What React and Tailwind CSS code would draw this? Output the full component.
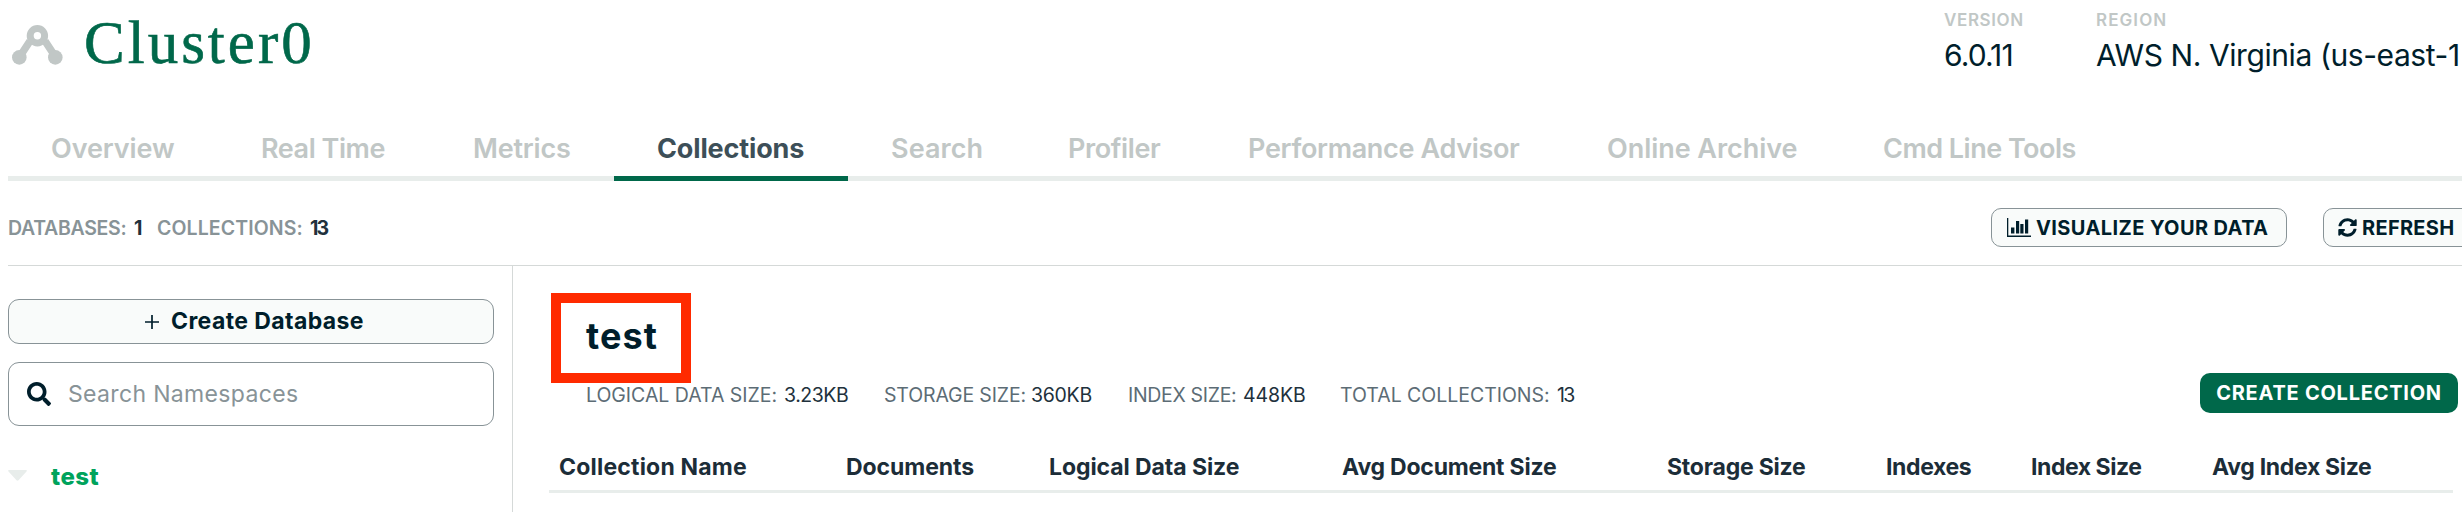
import React from "react";
import { FaSyncAlt, FaSearch } from "react-icons/fa";

const tabs = [
  { label: "Overview", cls: "w-[210px] pl-[43px] tracking-[-0.1px]" },
  { label: "Real Time", cls: "w-[212px] pl-[43px] tracking-[-0.45px]" },
  { label: "Metrics", cls: "w-[184px] pl-[43px] tracking-[-0.2px]" },
  { label: "Collections", cls: "w-[234px] pl-[43px] font-bold tracking-[-0.15px]", active: true },
  { label: "Search", cls: "w-[176px] pl-[43px] tracking-[0.07px]" },
  { label: "Profiler", cls: "w-[180px] pl-[44px] tracking-[-0.39px]" },
  { label: "Performance Advisor", cls: "w-[360px] pl-[44px] tracking-[-0.33px]" },
  { label: "Online Archive", cls: "w-[276px] pl-[43px] tracking-[-0.05px]" },
  { label: "Cmd Line Tools", cls: "flex-1 pl-[43px] tracking-[-0.51px]" },
];

const stats = [
  { label: "LOGICAL DATA SIZE:", value: "3.23KB", cls: "w-[298px]", lc: "w-[198px] tracking-[-0.02px]", vc: "tracking-[-0.45px]" },
  { label: "STORAGE SIZE:", value: "360KB", cls: "w-[244px]", lc: "w-[147px] tracking-[-0.15px]", vc: "tracking-[-0.29px]" },
  { label: "INDEX SIZE:", value: "448KB", cls: "w-[212px]", lc: "w-[115px] tracking-[-0.32px]", vc: "tracking-[-0.1px]" },
  { label: "TOTAL COLLECTIONS:", value: "13", cls: "", lc: "w-[217px] tracking-[-0.02px]", vc: "tracking-[-1.8px]" },
];

const columns = [
  { label: "Collection Name", cls: "w-[287px] tracking-[0.2px]" },
  { label: "Documents", cls: "w-[203px] tracking-[-0.08px]" },
  { label: "Logical Data Size", cls: "w-[293px] tracking-[-0.08px]" },
  { label: "Avg Document Size", cls: "w-[325px] tracking-[-0.22px]" },
  { label: "Storage Size", cls: "w-[219px] tracking-[-0.22px]" },
  { label: "Indexes", cls: "w-[145px] tracking-[-0.38px]" },
  { label: "Index Size", cls: "w-[181px] tracking-[-0.45px]" },
  { label: "Avg Index Size", cls: "tracking-[-0.32px]" },
];

function ClusterIcon() {
  return (
    <svg className="h-[42px] w-[52px] shrink-0" viewBox="0 0 52 42" fill="#c1c7c6">
      <path d="M18 17 L7.5 33 M33 17 L43.5 33" stroke="#c1c7c6" strokeWidth="7.5" />
      <circle cx="25.4" cy="11.7" r="7.2" fill="none" stroke="#c1c7c6" strokeWidth="7" />
      <circle cx="7.3" cy="33.4" r="7.3" />
      <circle cx="43.3" cy="33.4" r="7.3" />
    </svg>
  );
}

function ChartIcon() {
  return (
    <svg className="h-[19px] w-[24px] shrink-0" viewBox="0 0 24 19" fill="#001e2b">
      <path d="M0 0h1.3v17.5H24V19H0z" />
      <rect x="4" y="9.5" width="3.4" height="6" />
      <rect x="9" y="3" width="3.2" height="12.5" />
      <rect x="13.3" y="6" width="3.2" height="9.5" />
      <rect x="18" y="1.5" width="3.2" height="14" />
    </svg>
  );
}

export default function App() {
  return (
    <div className="flex h-[512px] w-full flex-col overflow-hidden whitespace-nowrap bg-white font-['Inter','Liberation_Sans',sans-serif] text-[#001e2b]">
      <header className="flex h-[121px] shrink-0">
        <div className="flex w-[1944px] items-start pl-3">
          <div className="pt-6">
            <ClusterIcon />
          </div>
          <h1 className="pl-[20px] pt-[11px] font-['Liberation_Serif',serif] text-[61px] leading-[64px] tracking-[3px] text-[#00684a] [-webkit-text-stroke:0.6px_#00684a]">
            Cluster0
          </h1>
        </div>
        <div className="w-[152px] shrink-0 pt-2">
          <div className="text-[17px] font-semibold leading-6 tracking-[0.62px] text-[#c1c7c6]">VERSION</div>
          <div className="pt-[5px] text-[30px] leading-9 tracking-[-0.9px]">6.0.11</div>
        </div>
        <div className="shrink-0 pt-2">
          <div className="text-[17px] font-semibold leading-6 tracking-[1.08px] text-[#c1c7c6]">REGION</div>
          <div className="pt-[5px] text-[30px] leading-9 tracking-[-0.42px]">AWS N. Virginia (us-east-1</div>
        </div>
      </header>

      <nav className="ml-2 flex h-[60px] shrink-0 text-[27px] font-semibold">
        {tabs.map((t) => (
          <div
            key={t.label}
            className={`${t.cls} shrink-0 border-b-[5px] leading-[56px] ${
              t.active ? "border-[#00684a] text-[#3d4f58]" : "border-[#e8edeb] text-[#c1c7c6]"
            }`}
          >
            {t.label}
          </div>
        ))}
      </nav>

      <div className="ml-2 flex h-[84px] shrink-0 items-center pt-[9px]">
        <div className="flex w-[1983px] shrink-0 text-[19.5px] font-semibold leading-6">
          <span className="w-[126px] tracking-[-0.3px] text-[#889397]">DATABASES:</span>
          <span className="w-[23px] font-bold text-[#21313c]">1</span>
          <span className="w-[153px] tracking-[0.11px] text-[#889397]">COLLECTIONS:</span>
          <span className="font-bold tracking-[-1.8px] text-[#21313c]">13</span>
        </div>
        <button className="flex h-[39px] w-[296px] shrink-0 items-center rounded-[10px] border border-[#889397] bg-[#f9fbfa] pl-[15px] text-[20px] font-bold tracking-[0.4px]">
          <ChartIcon />
          <span className="pl-[5px]">VISUALIZE YOUR DATA</span>
        </button>
        <button className="ml-[36px] flex h-[39px] w-[160px] shrink-0 items-center rounded-[10px] border border-[#889397] bg-[#f9fbfa] pl-[14px] text-[20px] font-bold tracking-[0.3px]">
          <FaSyncAlt className="size-[19px]" />
          <span className="pl-[5px]">REFRESH</span>
        </button>
      </div>

      <div className="ml-2 flex flex-1 border-t border-[#d5d9d8]">
        <aside className="flex w-[505px] shrink-0 flex-col border-r border-[#d5d9d8] pr-[18px] pt-[33px]">
          <button className="flex h-[45px] items-center rounded-[11px] border border-[#889397] bg-[#f9fbfa] pl-[135px] text-[23px] font-bold tracking-[0.4px]">
            <svg className="size-[16px]" viewBox="0 0 16 16" stroke="#001e2b" strokeWidth="1.7">
              <path d="M8 1v14M1 8h14" />
            </svg>
            <span className="pl-[11px]">Create Database</span>
          </button>
          <div className="mt-[18px] flex h-16 items-center rounded-[11px] border border-[#889397] pl-[18px]">
            <FaSearch className="size-[24px]" />
            <span className="pl-[17px] text-[23px] tracking-[0.34px] text-[#889397]">Search Namespaces</span>
          </div>
          <div className="flex pt-[35px]">
            <svg className="mt-[9px] h-[11px] w-[19px]" viewBox="0 0 19 11" fill="#e8edeb">
              <path d="M1 0h17q1.500 0.500 0.500 1.500L10.500 10.200q-1 0.900-2 0L0.500 1.500Q-0.500 0.500 1 0z" />
            </svg>
            <span className="pl-[24px] text-[24px] font-extrabold leading-8 tracking-[0.5px] text-[#00a35c]">test</span>
          </div>
        </aside>

        <main className="flex flex-1 flex-col pl-9 pt-[27px]">
          <div className="h-20 pl-[2px]">
            <div className="h-[90px] w-[140px] border-[10px] border-[#ff2a00] pl-[25px]">
              <h2 className="pt-[9px] text-[36px] font-bold leading-[48px] tracking-[1.1px]">test</h2>
            </div>
          </div>
          <div className="flex h-10 items-center">
            <div className="flex w-[1651px] shrink-0 pl-[37px] pt-1 text-[19.5px] leading-6">
              {stats.map((s) => (
                <div key={s.label} className={`${s.cls} flex shrink-0`}>
                  <span className={`${s.lc} shrink-0 text-[#5c6c75]`}>{s.label}</span>
                  <span className={`${s.vc} text-[#21313c]`}>{s.value}</span>
                </div>
              ))}
            </div>
            <button className="h-10 w-[258px] shrink-0 rounded-[10px] bg-[#00684a] text-[20px] font-bold tracking-[0.75px] text-white">
              CREATE COLLECTION
            </button>
          </div>
          <div className="mt-[30px] flex h-[50px] w-[1904px] border-b-[3px] border-[#e8edeb] pl-[10px] text-[23px] font-bold leading-[49px] text-[#1c2d38]">
            {columns.map((c) => (
              <div key={c.label} className={`${c.cls} shrink-0`}>
                {c.label}
              </div>
            ))}
          </div>
        </main>
      </div>
    </div>
  );
}
